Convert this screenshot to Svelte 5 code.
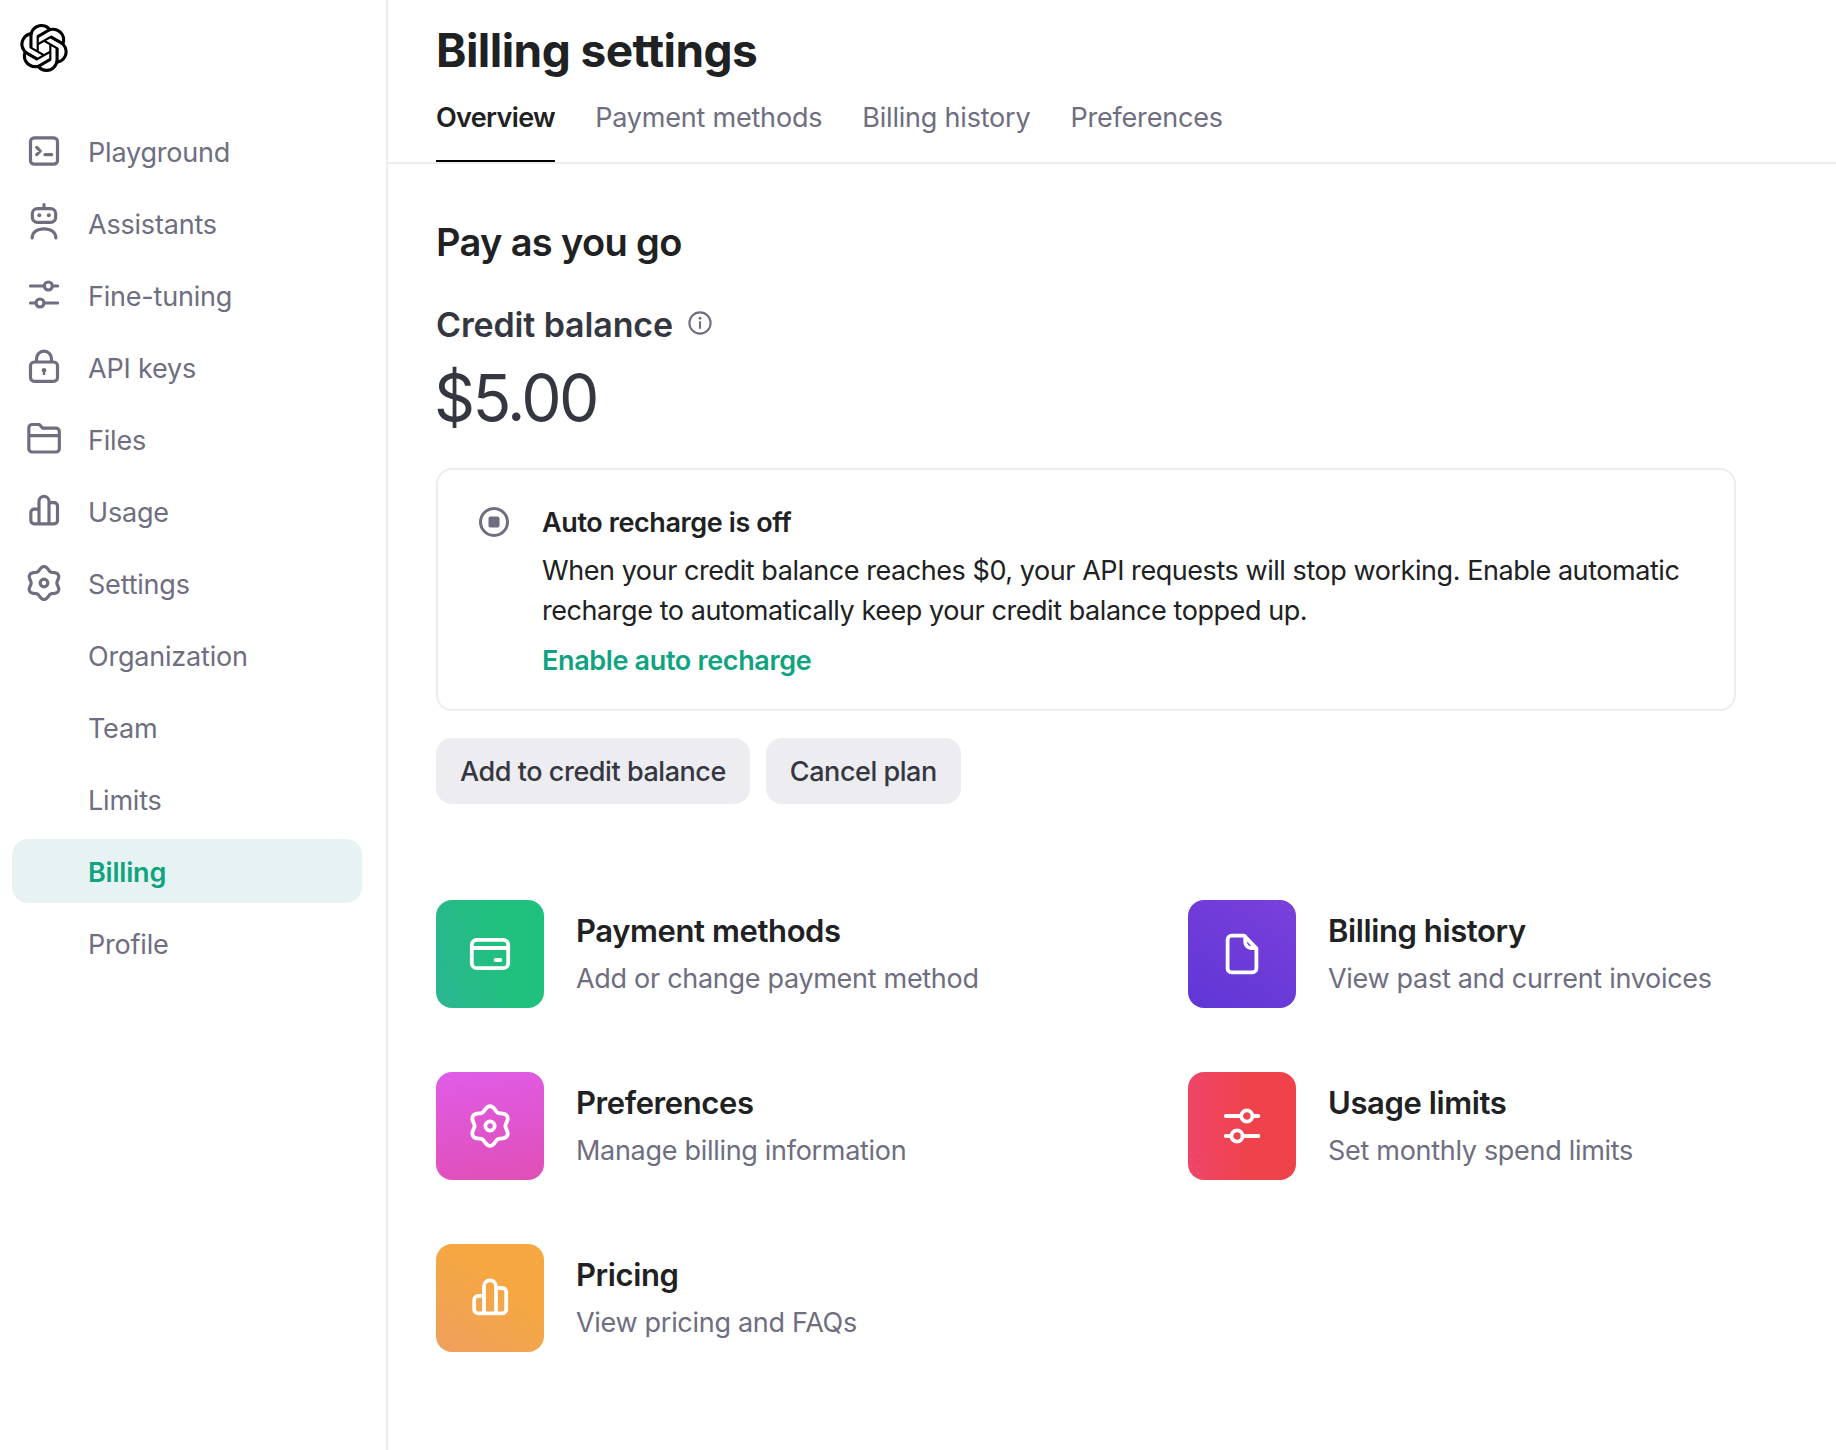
<script>
  const logo = 'M22.2819 9.8211a5.9847 5.9847 0 0 0-.5157-4.9108 6.0462 6.0462 0 0 0-6.5098-2.9A6.0651 6.0651 0 0 0 4.9807 4.1818a5.9847 5.9847 0 0 0-3.9977 2.9 6.0462 6.0462 0 0 0 .7427 7.0966 5.98 5.98 0 0 0 .511 4.9107 6.051 6.051 0 0 0 6.5146 2.9001A5.9847 5.9847 0 0 0 13.2599 24a6.0557 6.0557 0 0 0 5.7718-4.2058 5.9894 5.9894 0 0 0 3.9977-2.9001 6.0557 6.0557 0 0 0-.7475-7.0729zm-9.022 12.6081a4.4755 4.4755 0 0 1-2.8764-1.0408l.1419-.0804 4.7783-2.7582a.7948.7948 0 0 0 .3927-.6813v-6.7369l2.02 1.1686a.071.071 0 0 1 .038.052v5.5826a4.504 4.504 0 0 1-4.4945 4.4944zm-9.6607-4.1254a4.4708 4.4708 0 0 1-.5346-3.0137l.142.0852 4.783 2.7582a.7712.7712 0 0 0 .7806 0l5.8428-3.3685v2.3324a.0804.0804 0 0 1-.0332.0615L9.74 19.9502a4.4992 4.4992 0 0 1-6.1408-1.6464zM2.3408 7.8956a4.485 4.485 0 0 1 2.3655-1.9728V11.6a.7664.7664 0 0 0 .3879.6765l5.8144 3.3543-2.0201 1.1685a.0757.0757 0 0 1-.071 0l-4.8303-2.7865A4.504 4.504 0 0 1 2.3408 7.872zm16.5963 3.8558L13.1038 8.364 15.1192 7.2a.0757.0757 0 0 1 .071 0l4.8303 2.7913a4.4944 4.4944 0 0 1-.6765 8.1042v-5.6772a.79.79 0 0 0-.407-.667zm2.0107-3.0231l-.142-.0852-4.7735-2.7818a.7759.7759 0 0 0-.7854 0L9.409 9.2297V6.8974a.0662.0662 0 0 1 .0284-.0615l4.8303-2.7866a4.4992 4.4992 0 0 1 6.6802 4.66zM8.3065 12.863l-2.02-1.1638a.0804.0804 0 0 1-.038-.0567V6.0742a4.4992 4.4992 0 0 1 7.3757-3.4537l-.142.0805L8.704 5.459a.7948.7948 0 0 0-.3927.6813zm1.0976-2.3654l2.602-1.4998 2.6069 1.4998v2.9994l-2.5974 1.4997-2.6067-1.4997Z';

  // six lobed outline used by the settings icons
  function gearPath() {
    const pts = [];
    for (let i = 0; i < 96; i++) {
      const a = (i / 96) * Math.PI * 2;
      const r = 8.8 + 1.1 * Math.cos(6 * a);
      pts.push((12 + r * Math.sin(a)).toFixed(2) + ' ' + (12 - r * Math.cos(a)).toFixed(2));
    }
    return 'M' + pts.join('L') + 'Z';
  }
  const gear = gearPath();

  const icons = {
    terminal: 'M6.1 4.1h11.8a2.2 2.2 0 0 1 2.2 2.2v11.4a2.2 2.2 0 0 1-2.2 2.2H6.1a2.2 2.2 0 0 1-2.2-2.2V6.3a2.2 2.2 0 0 1 2.2-2.2z M7.6 9.8l2.2 2.2-2.2 2.2 M12.6 14.2h4',
    robot: 'M8 3.4h8a3 3 0 0 1 3 3v2.2a3 3 0 0 1-3 3H8a3 3 0 0 1-3-3V6.400a3 3 0 0 1 3-3z M12 1v2.400 M4.900 21c0-3.500 3-5.500 7.100-5.500s7.100 2 7.100 5.500',
    sliders: 'M3.900 6.600h8.200 M17 6.600h3.200 M3.900 16.800h3.300 M12 16.800h8.200 M14.600 4.200a2.400 2.400 0 1 0 0 4.800 2.400 2.400 0 0 0 0-4.800z M9.600 14.400a2.400 2.400 0 1 0 0 4.800 2.400 2.400 0 0 0 0-4.800z',
    slidersLg: 'M3.900 7h7.500 M17.400 7h2.800 M3.900 17h2.700 M12.500 17h7.700 M14.400 4.200a2.800 2.800 0 1 0 0 5.600 2.800 2.800 0 0 0 0-5.600z M9.500 14.200a2.800 2.800 0 1 0 0 5.600 2.800 2.800 0 0 0 0-5.600z',
    lock: 'M6.200 9h11.600a2.300 2.300 0 0 1 2.300 2.300v7a2.300 2.300 0 0 1-2.300 2.300H6.200a2.300 2.300 0 0 1-2.300-2.300v-7A2.300 2.300 0 0 1 6.200 9z M7.500 9V7a4.500 4.500 0 0 1 9 0v2',
    folder: 'M4.900 3.300h4.300l2 2.200h8a2 2 0 0 1 2 2v10.300a2 2 0 0 1-2 2H4.900a2 2 0 0 1-2-2V5.300a2 2 0 0 1 2-2z M2.900 10h18.200',
    bars: 'M9 19.700H6.100a2 2 0 0 1-2-2v-4.800a2 2 0 0 1 2-2H9z M9 19.700V6.200a3 3 0 0 1 6 0v13.500z M15 7h3.100a2 2 0 0 1 2 2v8.700a2 2 0 0 1-2 2H15',
    gear: gear + ' M12 9.700a2.300 2.300 0 1 0 0 4.600 2.300 2.300 0 0 0 0-4.600z',
    card: 'M5.400 4.900h13.200a2.500 2.500 0 0 1 2.500 2.500v9.200a2.500 2.500 0 0 1-2.500 2.500H5.400a2.500 2.500 0 0 1-2.500-2.500V7.400a2.500 2.500 0 0 1 2.500-2.500z M2.900 9h18.200 M14.800 15h2.400',
    file: 'M6.800 2.800H13l6.200 6.400v10a2 2 0 0 1-2 2H6.800a2 2 0 0 1-2-2V4.800a2 2 0 0 1 2-2z M13.600 3.200v2.800a3 3 0 0 0 3 3h2.400'
  };

  const nav = [
    { label: 'Playground', icon: 'terminal' },
    { label: 'Assistants', icon: 'robot' },
    { label: 'Fine-tuning', icon: 'sliders' },
    { label: 'API keys', icon: 'lock' },
    { label: 'Files', icon: 'folder' },
    { label: 'Usage', icon: 'bars' },
    { label: 'Settings', icon: 'gear' },
    { label: 'Organization' },
    { label: 'Team' },
    { label: 'Limits' },
    { label: 'Billing', active: true },
    { label: 'Profile' }
  ];

  const tabs = ['Overview', 'Payment methods', 'Billing history', 'Preferences'];

  const tiles = [
    { title: 'Payment methods', desc: 'Add or change payment method', icon: 'card', tone: 'green' },
    { title: 'Billing history', desc: 'View past and current invoices', icon: 'file', tone: 'purple' },
    { title: 'Preferences', desc: 'Manage billing information', icon: 'gear', tone: 'pink' },
    { title: 'Usage limits', desc: 'Set monthly spend limits', icon: 'slidersLg', tone: 'red' },
    { title: 'Pricing', desc: 'View pricing and FAQs', icon: 'bars', tone: 'orange' }
  ];
</script>

<div class="page">
  <aside class="sidebar">
    <svg class="logo" viewBox="0 0 24 24"><path d={logo} /></svg>
    <nav class="nav">
      {#each nav as item}
        <div class="nav__item" class:nav__item--active={item.active} class:nav__item--sub={!item.icon}>
          {#if item.icon}
            <svg class="nav__icon" viewBox="0 0 24 24">
              <path d={icons[item.icon]} />
              {#if item.icon === 'robot'}
                <circle class="dot" cx="9.200" cy="7.400" r="1.200" />
                <circle class="dot" cx="14.900" cy="7.400" r="1.200" />
              {/if}
              {#if item.icon === 'lock'}
                <circle class="dot" cx="12" cy="14" r="1.400" />
                <rect class="dot" x="11.300" y="14" width="1.400" height="2.800" />
              {/if}
            </svg>
          {/if}
          <span class="nav__label">{item.label}</span>
        </div>
      {/each}
    </nav>
  </aside>

  <main class="main">
    <header class="header">
      <h1 class="title">Billing settings</h1>
      <div class="tabs">
        {#each tabs as tab, i}
          <div class="tab" class:tab--active={i === 0}>{tab}</div>
        {/each}
      </div>
    </header>

    <section class="content">
      <h2 class="plan">Pay as you go</h2>
      <div class="balance-label">
        <span>Credit balance</span>
        <svg class="info" viewBox="0 0 24 24">
          <circle cx="12" cy="12" r="9.800" />
          <path d="M12 11v5.500" />
          <circle class="dot" cx="12" cy="7.600" r="1.300" />
        </svg>
      </div>
      <div class="balance">$5.00</div>

      <div class="notice">
        <svg class="notice__icon" viewBox="0 0 30 30">
          <circle cx="15" cy="15" r="13.500" />
          <rect class="dot" x="9.500" y="9.500" width="11" height="11" rx="2" />
        </svg>
        <div class="notice__body">
          <div class="notice__title">Auto recharge is off</div>
          <p class="notice__text">When your credit balance reaches $0, your API requests will stop working. Enable automatic recharge to automatically keep your credit balance topped up.</p>
          <div class="notice__link">Enable auto recharge</div>
        </div>
      </div>

      <div class="actions">
        <button class="btn">Add to credit balance</button>
        <button class="btn">Cancel plan</button>
      </div>

      <div class="tiles">
        {#each tiles as tile}
          <div class="tile">
            <div class="tile__icon tile__icon--{tile.tone}">
              <svg viewBox="0 0 24 24"><path d={icons[tile.icon]} /></svg>
            </div>
            <div class="tile__text">
              <div class="tile__title">{tile.title}</div>
              <div class="tile__desc">{tile.desc}</div>
            </div>
          </div>
        {/each}
      </div>
    </section>
  </main>
</div>

<style>
  :global(body) {
    margin: 0;
    background: #fff;
    font-family: Inter, "Noto Sans", sans-serif;
  }

  .page {
    display: flex;
    min-height: 1450px;
    color: #202123;
  }

  .sidebar {
    width: 386px;
    flex-shrink: 0;
    border-right: 2px solid #ececf1;
    padding-top: 24px;
  }
  .logo {
    display: block;
    width: 48px;
    height: 48px;
    margin: 0 0 47px 20px;
    fill: #000;
  }

  .nav {
    display: flex;
    flex-direction: column;
    gap: 8px;
    width: 350px;
    margin-left: 12px;
  }
  .nav__item {
    display: flex;
    align-items: center;
    gap: 24px;
    height: 64px;
    padding-left: 12px;
    border-radius: 16px;
    font-size: 27px;
    letter-spacing: -0.2px;
    color: #6e6e80;
  }
  .nav__label { margin-top: 2px; }
  .nav__item--sub { padding-left: 76px; }
  .nav__item--active {
    background: #e6f3f2;
    color: #10a37f;
    font-weight: 600;
  }
  .nav__icon {
    width: 40px;
    height: 40px;
    flex-shrink: 0;
    fill: none;
    stroke: #6e6e80;
    stroke-width: 1.900;
    stroke-linecap: round;
    stroke-linejoin: round;
  }
  .dot { fill: #6e6e80; stroke: none; }

  .main { flex: 1; min-width: 0; }

  .header {
    height: 164px;
    box-sizing: border-box;
    padding: 22px 0 0 48px;
    border-bottom: 2px solid #ececf1;
  }
  .title {
    margin: 0;
    font-size: 46px;
    line-height: 56px;
    font-weight: 700;
    letter-spacing: -0.55px;
  }
  .tabs {
    display: flex;
    gap: 40px;
    margin-top: 22px;
  }
  .tab {
    font-size: 27px;
    line-height: 36px;
    letter-spacing: -0.2px;
    padding-bottom: 24px;
    color: #6e6e80;
    border-bottom: 2px solid transparent;
  }
  .tab--active {
    color: #202123;
    font-weight: 600;
    letter-spacing: -0.65px;
    border-bottom-color: #000;
  }

  .content { padding: 54px 0 0 48px; }

  .plan {
    margin: 0;
    font-size: 38px;
    line-height: 48px;
    font-weight: 600;
    letter-spacing: -0.65px;
  }
  .balance-label {
    display: flex;
    align-items: center;
    gap: 14px;
    margin-top: 37px;
    font-size: 34px;
    line-height: 44px;
    font-weight: 600;
    letter-spacing: -0.13px;
    color: #353740;
  }
  .info {
    width: 26px;
    height: 26px;
    margin-top: -4px;
    fill: none;
    stroke: #6e6e80;
    stroke-width: 1.900;
    stroke-linecap: round;
  }
  .balance {
    margin: 15px 0 0 -2px;
    font-size: 64px;
    line-height: 72px;
    letter-spacing: -2.6px;
    color: #353740;
  }

  .notice {
    display: flex;
    width: 1300px;
    box-sizing: border-box;
    margin-top: 34px;
    padding: 33px 40px 30px 41px;
    border: 2px solid #ececf1;
    border-radius: 16px;
  }
  .notice__icon {
    width: 30px;
    height: 30px;
    margin: 4px 33px 0 0;
    flex-shrink: 0;
    fill: none;
    stroke: #6e6e80;
    stroke-width: 3;
  }
  .notice__title {
    font-size: 27px;
    line-height: 40px;
    font-weight: 600;
    letter-spacing: -0.4px;
  }
  .notice__text {
    margin: 8px 0 0;
    font-size: 27px;
    line-height: 40px;
    letter-spacing: -0.44px;
    color: #202123;
  }
  .notice__link {
    margin-top: 12px;
    font-size: 27px;
    line-height: 36px;
    font-weight: 600;
    letter-spacing: -0.35px;
    color: #10a37f;
  }

  .actions {
    display: flex;
    gap: 16px;
    margin-top: 27px;
  }
  .btn {
    height: 66px;
    padding: 0 24px;
    border: none;
    border-radius: 16px;
    background: #ececf1;
    font: 500 27px Inter, "Noto Sans", sans-serif;
    letter-spacing: -0.45px;
    color: #353740;
  }

  .tiles {
    display: grid;
    grid-template-columns: 752px 1fr;
    row-gap: 64px;
    margin-top: 96px;
  }
  .tile {
    display: flex;
    gap: 32px;
  }
  .tile__icon {
    position: relative;
    width: 108px;
    height: 108px;
    flex-shrink: 0;
    border-radius: 16px;
    display: flex;
    align-items: center;
    justify-content: center;
    overflow: hidden;
  }
  /* faint dotted corner on the gradient */
  .tile__icon::after {
    content: '';
    position: absolute;
    inset: 0;
    background-image: radial-gradient(rgba(255, 255, 255, 0.3) 0.6px, transparent 0.9px);
    background-size: 7px 7px;
    -webkit-mask-image: radial-gradient(circle at var(--dots, 100% 0), #000, transparent 26%);
    mask-image: radial-gradient(circle at var(--dots, 100% 0), #000, transparent 26%);
  }
  .tile__icon svg {
    width: 48px;
    height: 48px;
    fill: none;
    stroke: #fff;
    stroke-width: 1.900;
    stroke-linecap: round;
    stroke-linejoin: round;
  }
  .tile__icon--green { background: linear-gradient(75deg, #2cb592, #20c07e 60%); }
  .tile__icon--green::after { display: none; }
  .tile__icon--purple { background: linear-gradient(30deg, #5f37d6, #7a3fdb); }
  .tile__icon--pink { background: linear-gradient(170deg, #e05ce8, #e04fb6); --dots: 100% 100%; }
  .tile__icon--pink::after { opacity: 0.4; }
  .tile__icon--red { background: linear-gradient(90deg, #ee4568, #f0424a 60%); --dots: 0 100%; }
  .tile__icon--orange { background: linear-gradient(35deg, #f09f5e, #f5a841 65%); }
  .tile__icon--orange::after { display: none; }

  .tile__text { padding-top: 9px; }
  .tile__title {
    font-size: 31px;
    line-height: 44px;
    font-weight: 600;
    letter-spacing: -0.4px;
  }
  .tile__desc {
    margin-top: 6px;
    font-size: 27px;
    line-height: 40px;
    letter-spacing: -0.3px;
    color: #6e6e80;
  }
</style>
